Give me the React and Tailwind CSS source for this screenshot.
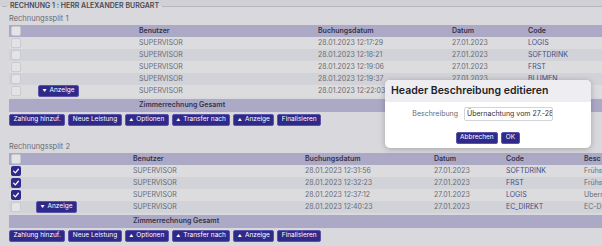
import React from 'react'

const font = { fontFamily: 'Inter, "Noto Sans", sans-serif' }

function Check({ checked }) {
  if (checked) {
    return (
      <div className="w-[10px] h-[10px] rounded-[2px] bg-[#2f2a8a] flex items-center justify-center">
        <svg width="8" height="8" viewBox="0 0 10 10">
          <path d="M2 5.2 L4.2 7.3 L8 2.8" fill="none" stroke="white" strokeWidth="1.6" strokeLinecap="round" strokeLinejoin="round" />
        </svg>
      </div>
    )
  }
  return <div className="w-[10px] h-[10px] rounded-[2px] border border-[#c9c9cf] bg-[#e4e4e7]" />
}

function Btn({ children, arrow }) {
  return (
    <div className="h-[12px] px-[3.5px] flex items-center gap-[3px] rounded-[2px] bg-[#2f2a8a] border border-[#5a55a8] text-white text-[6.5px] whitespace-nowrap">
      {arrow === 'up' && <span className="text-[4px]">▲</span>}
      {arrow === 'down' && <span className="text-[4px]">▼</span>}
      {children}
    </div>
  )
}

function Table({ cols, rows, btnPad, showBesc }) {
  return (
    <div className="w-[620px] ml-[9px]">
      <div className="flex items-center h-[12px] bg-[#aca9c7] text-[#33334a] text-[7px] font-semibold">
        <div className={`${cols[0]} pl-[2px]`}><Check /></div>
        <div className={cols[1]}>Benutzer</div>
        <div className={cols[2]}>Buchungsdatum</div>
        <div className={cols[3]}>Datum</div>
        <div className={cols[4]}>Code</div>
        {showBesc && <div className={cols[5]}>Besc</div>}
      </div>
      {rows.map((r, i) => (
        <div key={i} className={`flex items-center h-[12px] text-[7px] text-[#6b6b72] ${i % 2 === 0 ? 'bg-[#dcdcdf]' : 'bg-[#d1d3d8]'}`}>
          <div className={`${cols[0]} pl-[2px] flex items-center`}>
            <Check checked={r.checked} />
            {r.btn && <div className={btnPad}><Btn arrow="down">Anzeige</Btn></div>}
          </div>
          <div className={cols[1]}>SUPERVISOR</div>
          <div className={cols[2]}>{r.date}</div>
          <div className={cols[3]}>27.01.2023</div>
          <div className={`${cols[4]} text-[#3d4f8c]`}>{r.code}</div>
          {showBesc && <div className={`${cols[5]} whitespace-nowrap overflow-hidden`}>{r.besc}</div>}
        </div>
      ))}
      <div className="flex items-center h-[13px] mt-[2px] bg-[#aca9c7] text-[#33334a] text-[7px] font-semibold">
        <div className={cols[0]} />
        <div>Zimmerrechnung Gesamt</div>
      </div>
      <div className="flex gap-[3px] mt-[2px]">
        <Btn>Zahlung hinzuf.</Btn>
        <Btn>Neue Leistung</Btn>
        <Btn arrow="up">Optionen</Btn>
        <Btn arrow="up">Transfer nach</Btn>
        <Btn arrow="up">Anzeige</Btn>
        <Btn>Finalisieren</Btn>
      </div>
    </div>
  )
}

export default function App() {
  const rows1 = [
    { date: '28.01.2023 12:17:29', code: 'LOGIS' },
    { date: '28.01.2023 12:18:21', code: 'SOFTDRINK' },
    { date: '28.01.2023 12:19:06', code: 'FRST' },
    { date: '28.01.2023 12:19:37', code: 'BLUMEN' },
    { date: '28.01.2023 12:22:03', code: '', btn: true },
  ]
  const rows2 = [
    { date: '28.01.2023 12:31:56', code: 'SOFTDRINK', besc: 'Frühs', checked: true },
    { date: '28.01.2023 12:32:23', code: 'FRST', besc: 'Frühs', checked: true },
    { date: '28.01.2023 12:37:12', code: 'LOGIS', besc: 'Übern', checked: true },
    { date: '28.01.2023 12:40:23', code: 'EC_DIREKT', besc: 'EC-D', btn: true },
  ]
  const cols1 = ['w-[130px]', 'w-[179px]', 'w-[134px]', 'w-[76px]', 'w-[90px]']
  const cols2 = ['w-[124px]', 'w-[172px]', 'w-[129px]', 'w-[72px]', 'w-[78px]', 'w-[18px]']

  return (
    <div className="relative w-[602px] h-[246px] overflow-hidden bg-[#d9d9dd]" style={font}>
      <div className="h-[6px] bg-[#d0d1d6]" />
      <div className="relative flex items-center -mt-[6px] h-[12px]">
        <div className="w-[5px] ml-[2px] border-t border-[#b5b5bb]" />
        <div className="px-[3px] text-[7px] font-semibold text-[#4a4a52]">RECHNUNG 1 : HERR ALEXANDER BURGART</div>
        <div className="flex-1 border-t border-[#b5b5bb]" />
      </div>
      <div className="text-[7.5px] text-[#6a6a72] ml-[9px] mt-[1px] h-[12px]">Rechnungssplit 1</div>
      <Table cols={cols1} rows={rows1} btnPad="ml-[17px]" />
      <div className="text-[7.5px] text-[#6a6a72] ml-[9px] mt-[15px] h-[12px]">Rechnungssplit 2</div>
      <Table cols={cols2} rows={rows2} btnPad="ml-[15px]" showBesc />

      <div className="absolute left-[385px] top-[80px] w-[206px] h-[68px] rounded-[5px] bg-white shadow-[0_1px_6px_rgba(0,0,0,0.25)] overflow-hidden">
        <div className="h-[22px] bg-[#eeeef2] flex items-center pl-[6px] text-[10.5px] font-semibold text-[#1e1e28]">Header Beschreibung editieren</div>
        <div className="flex items-center mt-[5px] h-[14px]">
          <div className="w-[79px] text-right pr-[6px] text-[7px] text-[#6a6a72]">Beschreibung</div>
          <div className="w-[89px] h-[14px] border border-[#d4d4d8] rounded-[2px] flex items-center px-[2px] text-[7px] text-[#333] whitespace-nowrap overflow-hidden">Übernachtung vom 27.-28</div>
        </div>
        <div className="flex justify-center gap-[3px] mt-[11px]">
          <div className="h-[12px] px-[3px] flex items-center rounded-[2px] bg-[#2f2a8a] border border-[#5a55a8] text-white text-[6.5px]">Abbrechen</div>
          <div className="h-[12px] px-[4px] flex items-center rounded-[2px] bg-[#2f2a8a] border border-[#5a55a8] text-white text-[6.5px]">OK</div>
        </div>
      </div>
    </div>
  )
}
